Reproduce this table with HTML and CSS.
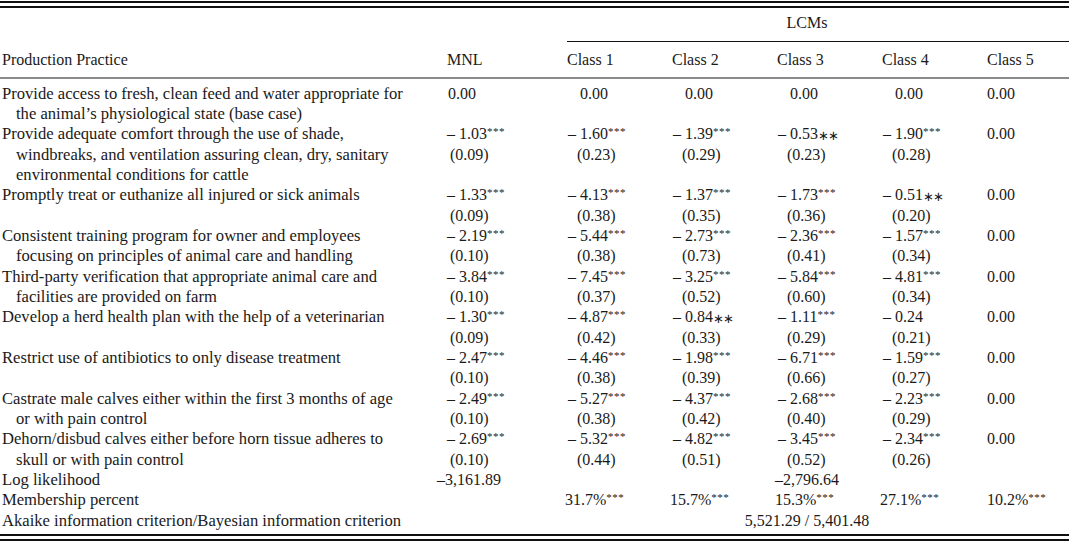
FILE: index.html
```html
<!DOCTYPE html>
<html lang="en">
<head>
<meta charset="utf-8">
<title>Production practice estimates</title>
<link rel="stylesheet" href="styles.css">
</head>
<body>
<div class="sheet">
  <div class="rule-top"></div>
  <table class="results">
    <colgroup>
      <col class="c-desc"><col class="c-mnl"><col class="c-cls"><col class="c-cls"><col class="c-cls"><col class="c-cls"><col class="c-last">
    </colgroup>
    <thead>
      <tr class="group">
        <th colspan="2"></th>
        <th colspan="5" class="lcm">LCMs</th>
      </tr>
      <tr class="heads">
        <th class="desc">Production Practice</th>
        <th>MNL</th>
        <th>Class 1</th>
        <th>Class 2</th>
        <th>Class 3</th>
        <th>Class 4</th>
        <th>Class 5</th>
      </tr>
    </thead>
    <tbody>
      <tr class="first">
        <td class="desc">Provide access to fresh, clean feed and water appropriate for<br>the animal’s physiological state (base case)</td>
        <td class="mnl"><div class="z">0.00</div></td>
        <td><div class="z">0.00</div></td>
        <td><div class="z">0.00</div></td>
        <td><div class="z">0.00</div></td>
        <td><div class="z">0.00</div></td>
        <td class="last"><div class="z">0.00</div></td>
      </tr>
      <tr>
        <td class="desc">Provide adequate comfort through the use of shade,<br>windbreaks, and ventilation assuring clean, dry, sanitary<br>environmental conditions for cattle</td>
        <td class="mnl"><div class="n">– 1.03<sup>***</sup></div><div class="s">(0.09)</div></td>
        <td><div class="n">– 1.60<sup>***</sup></div><div class="s">(0.23)</div></td>
        <td><div class="n">– 1.39<sup>***</sup></div><div class="s">(0.29)</div></td>
        <td><div class="n">– 0.53<span class="dd">∗∗</span></div><div class="s">(0.23)</div></td>
        <td><div class="n">– 1.90<sup>***</sup></div><div class="s">(0.28)</div></td>
        <td class="last"><div class="z">0.00</div></td>
      </tr>
      <tr>
        <td class="desc">Promptly treat or euthanize all injured or sick animals</td>
        <td class="mnl"><div class="n">– 1.33<sup>***</sup></div><div class="s">(0.09)</div></td>
        <td><div class="n">– 4.13<sup>***</sup></div><div class="s">(0.38)</div></td>
        <td><div class="n">– 1.37<sup>***</sup></div><div class="s">(0.35)</div></td>
        <td><div class="n">– 1.73<sup>***</sup></div><div class="s">(0.36)</div></td>
        <td><div class="n">– 0.51<span class="dd">∗∗</span></div><div class="s">(0.20)</div></td>
        <td class="last"><div class="z">0.00</div></td>
      </tr>
      <tr>
        <td class="desc">Consistent training program for owner and employees<br>focusing on principles of animal care and handling</td>
        <td class="mnl"><div class="n">– 2.19<sup>***</sup></div><div class="s">(0.10)</div></td>
        <td><div class="n">– 5.44<sup>***</sup></div><div class="s">(0.38)</div></td>
        <td><div class="n">– 2.73<sup>***</sup></div><div class="s">(0.73)</div></td>
        <td><div class="n">– 2.36<sup>***</sup></div><div class="s">(0.41)</div></td>
        <td><div class="n">– 1.57<sup>***</sup></div><div class="s">(0.34)</div></td>
        <td class="last"><div class="z">0.00</div></td>
      </tr>
      <tr>
        <td class="desc">Third-party verification that appropriate animal care and<br>facilities are provided on farm</td>
        <td class="mnl"><div class="n">– 3.84<sup>***</sup></div><div class="s">(0.10)</div></td>
        <td><div class="n">– 7.45<sup>***</sup></div><div class="s">(0.37)</div></td>
        <td><div class="n">– 3.25<sup>***</sup></div><div class="s">(0.52)</div></td>
        <td><div class="n">– 5.84<sup>***</sup></div><div class="s">(0.60)</div></td>
        <td><div class="n">– 4.81<sup>***</sup></div><div class="s">(0.34)</div></td>
        <td class="last"><div class="z">0.00</div></td>
      </tr>
      <tr>
        <td class="desc">Develop a herd health plan with the help of a veterinarian</td>
        <td class="mnl"><div class="n">– 1.30<sup>***</sup></div><div class="s">(0.09)</div></td>
        <td><div class="n">– 4.87<sup>***</sup></div><div class="s">(0.42)</div></td>
        <td><div class="n">– 0.84<span class="dd">∗∗</span></div><div class="s">(0.33)</div></td>
        <td><div class="n">– 1.11<sup>***</sup></div><div class="s">(0.29)</div></td>
        <td><div class="n">– 0.24</div><div class="s">(0.21)</div></td>
        <td class="last"><div class="z">0.00</div></td>
      </tr>
      <tr>
        <td class="desc">Restrict use of antibiotics to only disease treatment</td>
        <td class="mnl"><div class="n">– 2.47<sup>***</sup></div><div class="s">(0.10)</div></td>
        <td><div class="n">– 4.46<sup>***</sup></div><div class="s">(0.38)</div></td>
        <td><div class="n">– 1.98<sup>***</sup></div><div class="s">(0.39)</div></td>
        <td><div class="n">– 6.71<sup>***</sup></div><div class="s">(0.66)</div></td>
        <td><div class="n">– 1.59<sup>***</sup></div><div class="s">(0.27)</div></td>
        <td class="last"><div class="z">0.00</div></td>
      </tr>
      <tr>
        <td class="desc">Castrate male calves either within the first 3 months of age<br>or with pain control</td>
        <td class="mnl"><div class="n">– 2.49<sup>***</sup></div><div class="s">(0.10)</div></td>
        <td><div class="n">– 5.27<sup>***</sup></div><div class="s">(0.38)</div></td>
        <td><div class="n">– 4.37<sup>***</sup></div><div class="s">(0.42)</div></td>
        <td><div class="n">– 2.68<sup>***</sup></div><div class="s">(0.40)</div></td>
        <td><div class="n">– 2.23<sup>***</sup></div><div class="s">(0.29)</div></td>
        <td class="last"><div class="z">0.00</div></td>
      </tr>
      <tr>
        <td class="desc">Dehorn/disbud calves either before horn tissue adheres to<br>skull or with pain control</td>
        <td class="mnl"><div class="n">– 2.69<sup>***</sup></div><div class="s">(0.10)</div></td>
        <td><div class="n">– 5.32<sup>***</sup></div><div class="s">(0.44)</div></td>
        <td><div class="n">– 4.82<sup>***</sup></div><div class="s">(0.51)</div></td>
        <td><div class="n">– 3.45<sup>***</sup></div><div class="s">(0.52)</div></td>
        <td><div class="n">– 2.34<sup>***</sup></div><div class="s">(0.26)</div></td>
        <td class="last"><div class="z">0.00</div></td>
      </tr>
      <tr>
        <td class="desc">Log likelihood</td>
        <td class="mnl"><div class="ll">–3,161.89</div></td>
        <td colspan="5" class="span"><div>–2,796.64</div></td>
      </tr>
      <tr>
        <td class="desc">Membership percent</td>
        <td class="mnl"></td>
        <td><div class="p">31.7%<sup>***</sup></div></td>
        <td><div class="p">15.7%<sup>***</sup></div></td>
        <td><div class="p">15.3%<sup>***</sup></div></td>
        <td><div class="p">27.1%<sup>***</sup></div></td>
        <td class="last"><div class="p">10.2%<sup>***</sup></div></td>
      </tr>
      <tr class="final">
        <td class="desc">Akaike information criterion/Bayesian information criterion</td>
        <td class="mnl"></td>
        <td colspan="5" class="span"><div>5,521.29 / 5,401.48</div></td>
      </tr>
    </tbody>
  </table>
  <div class="rule-bottom"></div>
</div>
</body>
</html>
```
FILE: styles.css
```css
html, body {
  margin: 0;
  padding: 0;
  background: #ffffff;
}

.sheet {
  width: 1069px;
  padding-top: 1px;
  font-family: "Liberation Serif", "Times New Roman", serif;
  font-size: 16px;
  color: #1a1a1a;
}

.rule-top,
.rule-bottom {
  height: 3px;
  border-top: 2px solid #111;
  border-bottom: 2px solid #111;
}

.rule-bottom {
  margin-top: 2px;
}

.results {
  width: 1069px;
  border-collapse: collapse;
  table-layout: fixed;
}

.c-desc { width: 447px; }
.c-mnl { width: 120px; }
.c-cls { width: 105px; }
.c-last { width: 82px; }

.results th,
.results td {
  padding: 0;
  text-align: left;
  vertical-align: top;
  font-weight: normal;
  line-height: 20.33px;
  white-space: nowrap;
}

.results .group th {
  padding-top: 5px;
  padding-bottom: 8px;
}

.results .group th.lcm {
  border-bottom: 1px solid #111;
  text-align: center;
  padding-right: 22px;
}

.results .heads th {
  padding-top: 8px;
  padding-bottom: 6px;
  border-bottom: 2px solid #8a8a8a;
}

.results .heads th.desc {
  padding-left: 2px;
}

.results .first td {
  padding-top: 5px;
}

.results td.desc {
  padding-left: 16px;
  text-indent: -14px;
  font-size: 16.6px;
}

.n { padding-left: 1px; }
.s { padding-left: 10px; }
.z { padding-left: 13px; }
.p { margin-left: -2px; }

.mnl .n { padding-left: 0; }
.mnl .s { padding-left: 3px; }
.mnl .z { padding-left: 1px; }
.mnl .ll { margin-left: -10px; }

.last .z { padding-left: 0; }
.last .p { margin-left: 0; }

.results td.span {
  text-align: center;
}

.span div {
  padding-right: 22px;
}

sup {
  font-size: 11px;
  line-height: 0;
  vertical-align: 4px;
  letter-spacing: 0.5px;
}

.dd {
  font-size: 13px;
  line-height: 0;
  letter-spacing: -1px;
  vertical-align: -1px;
}

.results .final td {
  padding-bottom: 1px;
}
```
